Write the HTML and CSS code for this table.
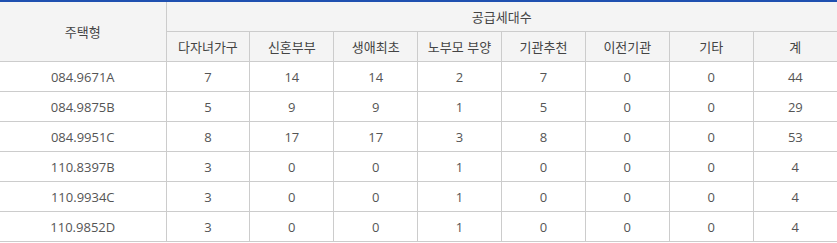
FILE: index.html
```html
<!DOCTYPE html>
<html lang="ko">
<head>
<meta charset="utf-8">
<link rel="stylesheet" href="styles.css">
</head>
<body>
<table class="supply">
  <colgroup>
    <col class="c-type">
    <col span="8" class="c-num">
  </colgroup>
  <thead>
    <tr>
      <th rowspan="2" class="first">주택형</th>
      <th colspan="8">공급세대수</th>
    </tr>
    <tr>
      <th>다자녀가구</th>
      <th>신혼부부</th>
      <th>생애최초</th>
      <th>노부모 부양</th>
      <th>기관추천</th>
      <th>이전기관</th>
      <th>기타</th>
      <th>계</th>
    </tr>
  </thead>
  <tbody>
    <tr><td class="first">084.9671A</td><td>7</td><td>14</td><td>14</td><td>2</td><td>7</td><td>0</td><td>0</td><td>44</td></tr>
    <tr><td class="first">084.9875B</td><td>5</td><td>9</td><td>9</td><td>1</td><td>5</td><td>0</td><td>0</td><td>29</td></tr>
    <tr><td class="first">084.9951C</td><td>8</td><td>17</td><td>17</td><td>3</td><td>8</td><td>0</td><td>0</td><td>53</td></tr>
    <tr><td class="first">110.8397B</td><td>3</td><td>0</td><td>0</td><td>1</td><td>0</td><td>0</td><td>0</td><td>4</td></tr>
    <tr><td class="first">110.9934C</td><td>3</td><td>0</td><td>0</td><td>1</td><td>0</td><td>0</td><td>0</td><td>4</td></tr>
    <tr><td class="first">110.9852D</td><td>3</td><td>0</td><td>0</td><td>1</td><td>0</td><td>0</td><td>0</td><td>4</td></tr>
  </tbody>
</table>
</body>
</html>
```
FILE: styles.css
```css
html, body {
  margin: 0;
  padding: 0;
  background: #fff;
}
.supply {
  width: 837px;
  border-collapse: collapse;
  table-layout: fixed;
  border-top: 2px solid #1f50b0;
  font-family: "Noto Sans CJK KR", "Noto Sans", sans-serif;
  font-size: 13px;
  color: #555;
}
.c-type { width: 166px; }
.supply th, .supply td {
  height: 29px;
  padding: 0;
  text-align: center;
  vertical-align: middle;
  border-bottom: 1px solid #ccc;
  border-left: 1px solid #ccc;
  font-weight: normal;
  line-height: 18px;
}
.supply th {
  background: #f4f4f4;
  color: #444;
}
.supply .first {
  border-left: none;
}
.supply td {
  font-family: "Open Sans", "Noto Sans", sans-serif;
}
```
